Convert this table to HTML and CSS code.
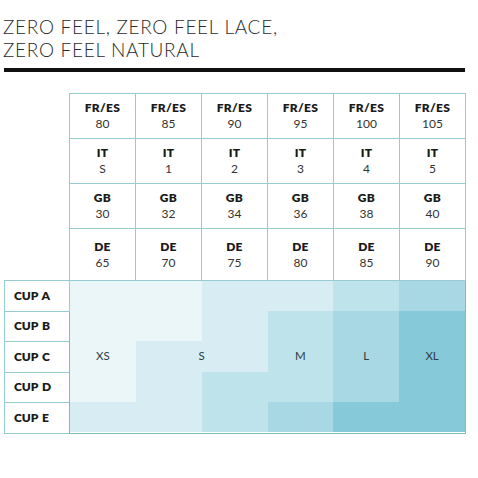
FILE: index.html
```html
<!DOCTYPE html>
<html lang="en">
<head>
	<meta charset="UTF-8">
	<title>Zero Feel - Size Chart</title>
	<link rel="stylesheet" href="styles.css">
</head>
<body>
	<div class="heading">
		<h1>ZERO FEEL, ZERO FEEL LACE,<br>ZERO FEEL NATURAL</h1>
	</div>
	<table class="chart">
		<tr class="band">
			<td class="blank"></td>
			<td><b>FR/ES</b><br>80</td>
			<td><b>FR/ES</b><br>85</td>
			<td><b>FR/ES</b><br>90</td>
			<td><b>FR/ES</b><br>95</td>
			<td><b>FR/ES</b><br>100</td>
			<td><b>FR/ES</b><br>105</td>
		</tr>
		<tr class="band">
			<td class="blank"></td>
			<td><b>IT</b><br>S</td>
			<td><b>IT</b><br>1</td>
			<td><b>IT</b><br>2</td>
			<td><b>IT</b><br>3</td>
			<td><b>IT</b><br>4</td>
			<td><b>IT</b><br>5</td>
		</tr>
		<tr class="band">
			<td class="blank"></td>
			<td><b>GB</b><br>30</td>
			<td><b>GB</b><br>32</td>
			<td><b>GB</b><br>34</td>
			<td><b>GB</b><br>36</td>
			<td><b>GB</b><br>38</td>
			<td><b>GB</b><br>40</td>
		</tr>
		<tr class="band band-last">
			<td class="blank"></td>
			<td><b>DE</b><br>65</td>
			<td><b>DE</b><br>70</td>
			<td><b>DE</b><br>75</td>
			<td><b>DE</b><br>80</td>
			<td><b>DE</b><br>85</td>
			<td><b>DE</b><br>90</td>
		</tr>
		<tr class="cup">
			<td class="cup-name">CUP A</td>
			<td class="sizes" colspan="6" rowspan="5">
				<div class="size-grid">
					<div class="xs"></div><div class="xs"></div><div class="s"></div><div class="s"></div><div class="m"></div><div class="l"></div>
					<div class="xs"></div><div class="xs"></div><div class="s"></div><div class="m"></div><div class="l"></div><div class="xl"></div>
					<div class="xs">XS</div><div class="s wide">S</div><div class="m">M</div><div class="l">L</div><div class="xl">XL</div>
					<div class="xs"></div><div class="s"></div><div class="m"></div><div class="m"></div><div class="l"></div><div class="xl"></div>
					<div class="s"></div><div class="s"></div><div class="m"></div><div class="l"></div><div class="xl"></div><div class="xl"></div>
				</div>
			</td>
		</tr>
		<tr class="cup"><td class="cup-name">CUP B</td></tr>
		<tr class="cup"><td class="cup-name">CUP C</td></tr>
		<tr class="cup"><td class="cup-name">CUP D</td></tr>
		<tr class="cup"><td class="cup-name">CUP E</td></tr>
	</table>
</body>
</html>
```

FILE: styles.css
```css
* {
	box-sizing: border-box;
}
body {
	margin: 0;
	background: white;
	color: #222;
	font-family: Lato, "Open Sans", sans-serif;
}
.heading {
	margin: 0 13px 0 4px;
	padding-top: 16px;
	border-bottom: 4px solid #111;
}
.heading h1 {
	margin: 0 0 7px -1px;
	font-size: 19px;
	font-weight: 300;
	line-height: 22.5px;
	letter-spacing: 0.7px;
	color: #2a2a2a;
}
.chart {
	margin: 21px 0 0 4px;
	border-collapse: collapse;
	table-layout: fixed;
	width: 461px;
}
.chart td {
	padding: 0;
	border: 1px solid #97cbd2;
	text-align: center;
	font-size: 12px;
	line-height: 16px;
	color: #333;
	width: 66px;
}
.chart td b {
	color: #1a1a1a;
	font-weight: 800;
	letter-spacing: 0.3px;
}
.chart td.blank {
	border: none;
	border-right: 1px solid #97cbd2;
	width: 65px;
}
.band td {
	height: 45px;
}
.band-last td {
	height: 52px;
}
.cup td.cup-name {
	height: 30.5px;
	text-align: left;
	padding-left: 9px;
	font-size: 12px;
	font-weight: 800;
	color: #1a1a1a;
	word-spacing: 1px;
}
.chart td.sizes {
	border: 1px solid #7dbcc5;
	height: 152px;
	vertical-align: top;
}
.size-grid {
	display: grid;
	grid-template-columns: repeat(6, 1fr);
	grid-template-rows: repeat(5, 1fr);
	height: 151px;
}
.size-grid div {
	display: flex;
	align-items: center;
	justify-content: center;
	font-size: 11.5px;
	color: #2c3e44;
}
.size-grid .wide {
	grid-column: span 2;
}
.xs { background: #eaf6f8; }
.s { background: #d7edf3; }
.m { background: #bfe3eb; }
.l { background: #a7d8e3; }
.xl { background: #86cad9; }
```
